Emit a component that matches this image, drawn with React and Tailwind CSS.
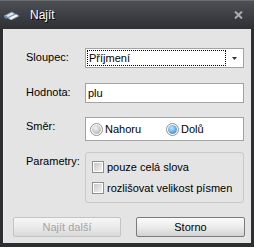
import React from "react";

function Radio({ checked }) {
  return (
    <svg width="13" height="13" viewBox="0 0 13 13" className="shrink-0">
      <defs>
        <radialGradient id={checked ? "rOn" : "rOff"} cx="0.4" cy="0.35" r="0.7">
          <stop offset="0" stopColor={checked ? "#bfe6ff" : "#f4f4f4"} />
          <stop offset="1" stopColor={checked ? "#3a8fd8" : "#b4b4b4"} />
        </radialGradient>
      </defs>
      <circle cx="6.5" cy="6.5" r="6" fill="#fff" stroke="#8e8f8f" />
      <circle cx="6.5" cy="6.5" r="4.5" fill={`url(#${checked ? "rOn" : "rOff"})`} />
    </svg>
  );
}

function Check({ label }) {
  return (
    <div className="flex items-center gap-[3px]">
      <div className="w-[12px] h-[12px] border border-[#8f8f8f] bg-white p-[1px] shrink-0">
        <div className="w-full h-full bg-gradient-to-br from-[#c9c9c9] to-[#f2f2f2]" />
      </div>
      <span>{label}</span>
    </div>
  );
}

export default function App() {
  return (
    <div
      className="w-[254px] h-[247px] bg-[#2c2e31] flex flex-col text-[11px] text-black"
      style={{ fontFamily: "Tahoma, 'Liberation Sans', sans-serif" }}
    >
      <header className="h-[29px] flex items-center justify-between pl-[3px] pr-[11px] border-t border-[#6a6d72] bg-gradient-to-b from-[#4c4f54] to-[#2e3034]">
        <div className="flex items-center gap-[10px]">
          <svg width="17" height="10" viewBox="0 0 17 10">
            <path d="M1 6 L9 2 L12 4 L4 8 Z" fill="#dfe6ee" stroke="#7f93a8" strokeWidth="0.8" />
            <path d="M5 8 L13 4 L16 6 L8 10 Z" fill="#f4f6f8" stroke="#7f93a8" strokeWidth="0.8" />
            <circle cx="3" cy="7" r="1.5" fill="#5c8fc4" />
          </svg>
          <span className="text-white text-[12px] [text-shadow:1px_1px_0_#000]">Najít</span>
        </div>
        <svg width="9" height="8" viewBox="0 0 9 8">
          <path d="M1 0.5 L8 7.5 M8 0.5 L1 7.5" stroke="#a9adb2" strokeWidth="2" />
        </svg>
      </header>
      <div className="flex-1 mx-[3px] mb-[4px] bg-[#e4e4e4] border-l border-[#ededed] flex flex-col pt-[19px] pl-[22px] pr-[7px]">
        <div className="flex h-[20px]">
          <span className="w-[59px] pt-[1px]">Sloupec:</span>
          <div className="flex-1 flex items-center bg-white border border-[#a3a3a3] pl-[1px] pr-[5px]">
            <div className="flex-1 h-[16px] border border-dotted border-black flex items-center pl-[1px]">Příjmení</div>
            <svg width="5" height="3" viewBox="0 0 5 3" className="ml-[6px] mr-[1px]">
              <path d="M0 0 H5 L2.5 3 Z" fill="#333" />
            </svg>
          </div>
        </div>
        <div className="flex h-[20px] mt-[15px]">
          <span className="w-[59px] pt-[1px]">Hodnota:</span>
          <div className="flex-1 flex items-center bg-white border border-[#a3a3a3] pl-[2px]">plu</div>
        </div>
        <div className="flex h-[24px] mt-[14px]">
          <span className="w-[59px] pt-[1px]">Směr:</span>
          <div className="flex-1 flex items-center bg-white border border-[#a3a3a3] pl-[4px]">
            <div className="flex items-center gap-[2px] w-[76px]">
              <Radio />
              <span>Nahoru</span>
            </div>
            <div className="flex items-center gap-[2px]">
              <Radio checked />
              <span>Dolů</span>
            </div>
          </div>
        </div>
        <div className="flex h-[51px] mt-[11px]">
          <span className="w-[59px] pt-[1px]">Parametry:</span>
          <div className="flex-1 border border-[#c9c9c9] rounded-[3px] flex flex-col justify-center gap-[5px] pl-[6px]">
            <Check label="pouze celá slova" />
            <Check label="rozlišovat velikost písmen" />
          </div>
        </div>
        <div className="flex justify-between mt-[14px] -ml-[13px] -mr-[1px]">
          <button className="w-[108px] h-[20px] rounded-[2px] border border-[#c4c4c4] bg-gradient-to-b from-[#f6f6f6] via-[#ebebeb] to-[#d9d9d9] text-[#a3a3a3]">
            Najít další
          </button>
          <button className="w-[109px] h-[20px] rounded-[2px] border border-[#7b7b7b] bg-gradient-to-b from-[#fbfbfb] via-[#ececec] to-[#d2d2d2]">
            Storno
          </button>
        </div>
      </div>
    </div>
  );
}
